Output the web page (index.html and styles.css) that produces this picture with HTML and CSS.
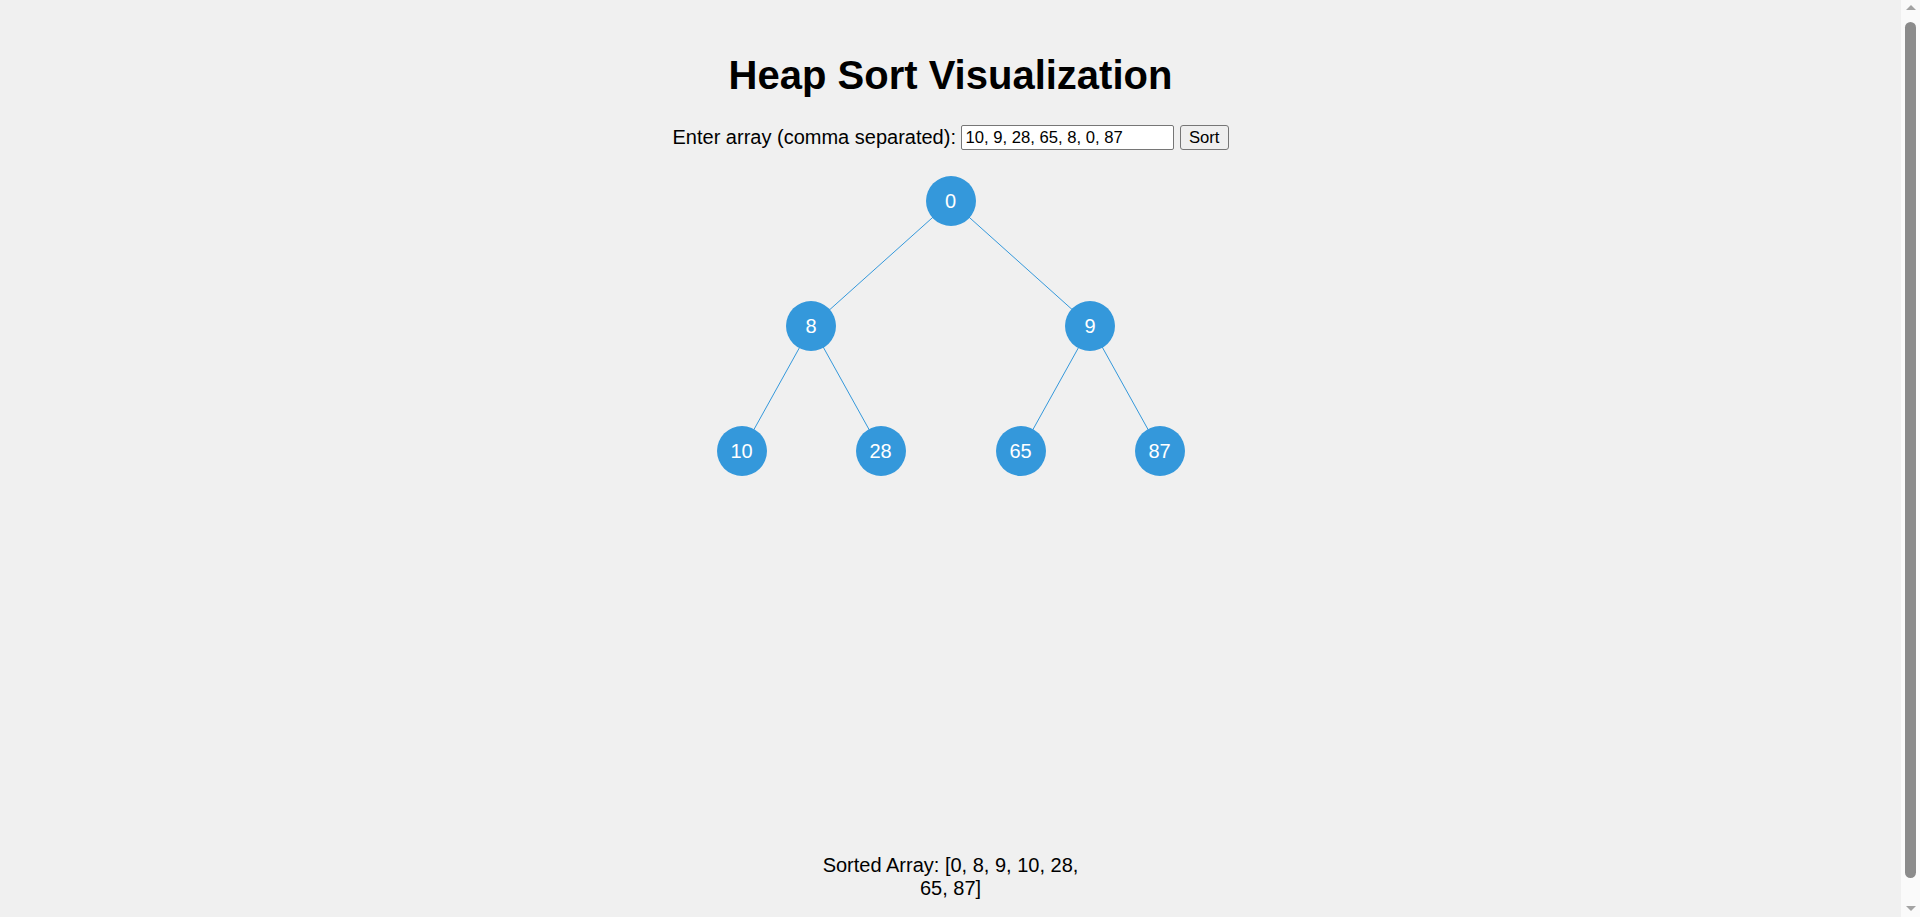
FILE: index.html
```html
<!DOCTYPE html>
<html lang="en">
<head>
<meta charset="utf-8">
<title>Heap Sort Visualization</title>
<link rel="stylesheet" href="styles.css">
</head>
<body>
<h1 class="title">Heap Sort Visualization</h1>
<div class="controls">
  <label class="label" for="arr">Enter array (comma separated):</label>
  <input class="array-input" id="arr" type="text" value="10, 9, 28, 65, 8, 0, 87">
  <button class="sort-btn" type="button">Sort</button>
</div>
<div class="tree">
  <svg class="edges" width="600" height="320" viewBox="0 0 600 320">
    <line x1="300" y1="25" x2="160.5" y2="150"/>
    <line x1="300" y1="25" x2="439.5" y2="150"/>
    <line x1="160.5" y1="150" x2="91" y2="275"/>
    <line x1="160.5" y1="150" x2="230" y2="275"/>
    <line x1="439.5" y1="150" x2="370" y2="275"/>
    <line x1="439.5" y1="150" x2="509" y2="275"/>
  </svg>
  <div class="node" style="left:275px;top:0px">0</div>
  <div class="node" style="left:135.5px;top:125px">8</div>
  <div class="node" style="left:414.5px;top:125px">9</div>
  <div class="node" style="left:66px;top:250px">10</div>
  <div class="node" style="left:205px;top:250px">28</div>
  <div class="node" style="left:345px;top:250px">65</div>
  <div class="node" style="left:484px;top:250px">87</div>
</div>
<p class="result">Sorted Array: [0, 8, 9, 10, 28, 65, 87]</p>
<div class="scrollbar" aria-hidden="true">
  <span class="sb-arrow sb-up"></span>
  <span class="sb-thumb"></span>
  <span class="sb-arrow sb-down"></span>
</div>
</body>
</html>
```
FILE: styles.css
```css
html {
  background: #f0f0f0;
}
body {
  margin: 0;
  padding: 25px 44px 25px 25px;
  background: #f0f0f0;
  font-family: "Liberation Sans", Arial, sans-serif;
  font-size: 20px;
  text-align: center;
  color: #000;
}
.title {
  font-size: 40px;
  font-weight: bold;
  margin: 26.8px 0;
  line-height: 46px;
}
.controls {
  display: flex;
  justify-content: center;
  align-items: center;
  gap: 5.5px;
  height: 26px;
}
.label {
  font-size: 20px;
  line-height: 23px;
}
.array-input {
  box-sizing: border-box;
  width: 213px;
  height: 25px;
  padding: 1px 3px;
  border: 1px solid #767676;
  border-radius: 2px;
  background: #fff;
  font-family: "Liberation Sans", Arial, sans-serif;
  font-size: 16.67px;
  color: #000;
}
.sort-btn {
  box-sizing: border-box;
  height: 25px;
  padding: 0 8px;
  border: 1px solid #767676;
  border-radius: 3px;
  background: #efefef;
  font-family: "Liberation Sans", Arial, sans-serif;
  font-size: 16.67px;
  color: #000;
}
.tree {
  position: relative;
  width: 600px;
  height: 658px;
  margin: 25px auto 0;
}
.edges {
  position: absolute;
  left: 0;
  top: 0;
}
.edges line {
  stroke: #3498db;
  stroke-width: 1;
}
.node {
  position: absolute;
  width: 50px;
  height: 50px;
  border-radius: 50%;
  background: #3498db;
  color: #fff;
  font-size: 20px;
  line-height: 50px;
  text-align: center;
}
.result {
  width: 270px;
  margin: 20px auto;
  font-size: 20px;
  line-height: 23px;
}
.scrollbar {
  position: fixed;
  top: 0;
  right: 0;
  width: 19px;
  height: 100%;
  background: #fafafa;
  display: flex;
  flex-direction: column;
  align-items: center;
  box-sizing: border-box;
  padding: 5px 0 6px;
}
.sb-arrow {
  width: 0;
  height: 0;
  border-left: 5px solid transparent;
  border-right: 5px solid transparent;
}
.sb-up {
  border-bottom: 5px solid #a3a3a3;
}
.sb-down {
  margin-top: auto;
  border-top: 5px solid #a3a3a3;
}
.sb-thumb {
  margin-top: 12px;
  width: 11px;
  height: 856px;
  border-radius: 6px;
  background: #8b8b8b;
}
```
